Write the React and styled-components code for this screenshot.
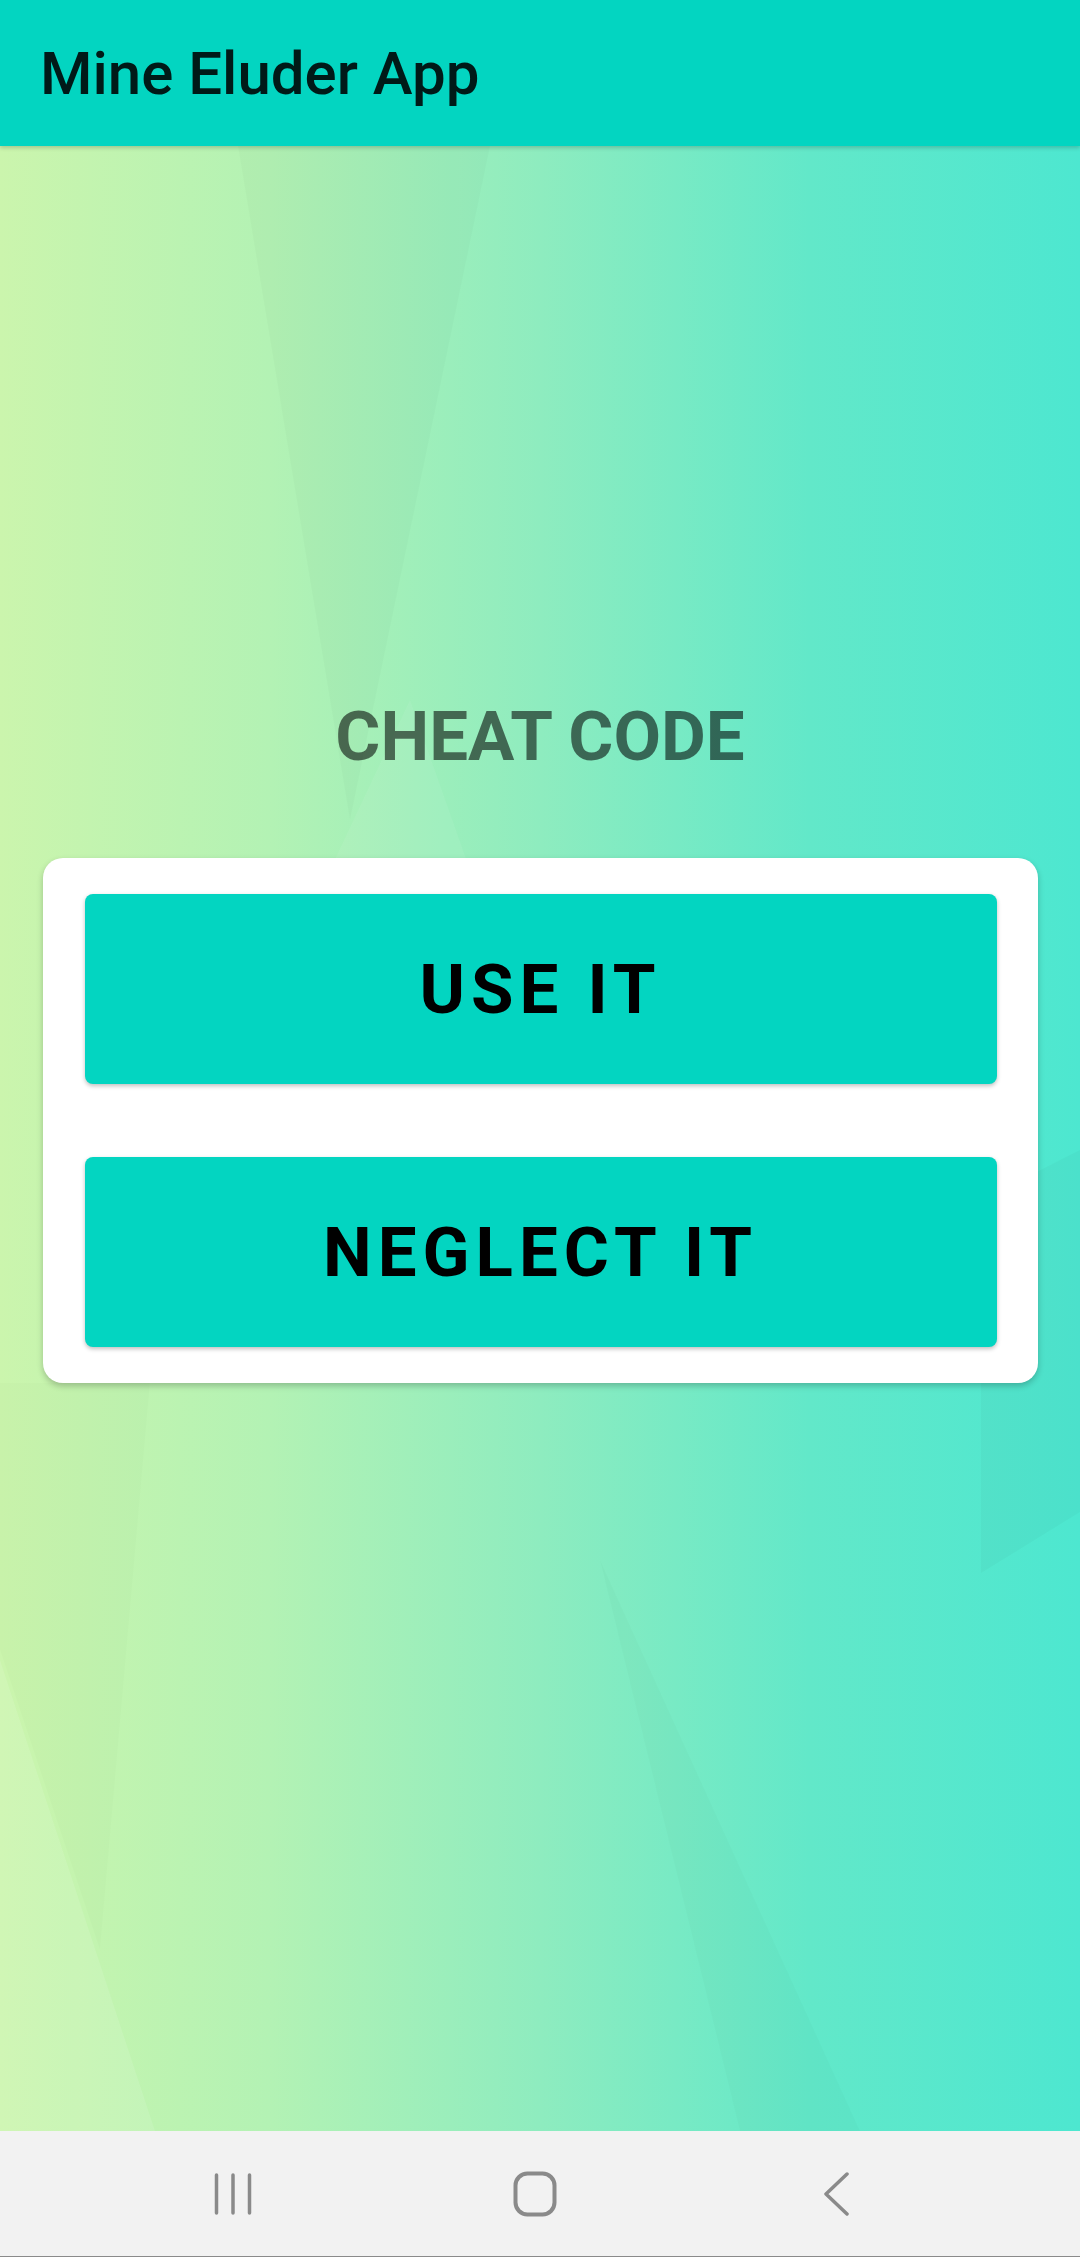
import React from 'react'
import styled, { createGlobalStyle } from "styled-components"

const GlobalStyle = createGlobalStyle`
  html, body {
    margin: 0;
    padding: 0;
  }
  body {
    font-family: Roboto, "Noto Sans", "Liberation Sans", sans-serif;
  }
`;

// faint polygon facets of the wallpaper
const facets = `<svg xmlns='http://www.w3.org/2000/svg' viewBox='0 0 1080 2257' preserveAspectRatio='none'>
<polygon points='238,146 490,146 350,820' fill='black' fill-opacity='0.018'/>
<polygon points='330,870 470,870 410,700' fill='white' fill-opacity='0.06'/>
<polygon points='981,1200 1080,1150 1080,1512 981,1573' fill='black' fill-opacity='0.025'/>
<polygon points='0,1383 150,1383 100,1950 0,1650' fill='black' fill-opacity='0.012'/>
<polygon points='0,1660 0,2131 155,2131' fill='white' fill-opacity='0.1'/>
<polygon points='600,1560 740,2131 860,2131' fill='black' fill-opacity='0.015'/>
</svg>`;

const Page = styled.div`
    display: flex;
    flex-direction: column;
    min-height: 2257px;
    background-image:
        url("data:image/svg+xml,${encodeURIComponent(facets)}"),
        linear-gradient(90deg, #cbf5ad 0%, #b3f2b4 25%, #8eecbf 50%, #62e8c9 75%, #4de7d0 100%);
    background-size: 100% 100%;
`;

const TopBar = styled.header`
    height: 146px;
    display: flex;
    align-items: center;
    padding-left: 40px;
    background: #03d5c1;
    box-shadow: 0 2px 4px rgba(0, 0, 0, 0.18);
    box-sizing: border-box;
    z-index: 1;

    & h1 {
        margin: 0;
        font-size: 60px;
        font-weight: 500;
        color: rgba(0, 0, 0, 0.88);
    }
`;

const Main = styled.main`
    flex: 1;
    display: flex;
    flex-direction: column;
    align-items: center;
    padding-top: 550px;
`;

const Heading = styled.h2`
    margin: 0;
    font-size: 69px;
    line-height: 82px;
    font-weight: 700;
    color: rgba(0, 0, 0, 0.56);
`;

const Card = styled.section`
    margin-top: 80px;
    width: 995px;
    box-sizing: border-box;
    padding: 36px 41px 36px 42px;
    display: flex;
    flex-direction: column;
    gap: 73px;
    background: #fff;
    border-radius: 20px;
    box-shadow: 0 3px 6px rgba(0, 0, 0, 0.22);
`;

const ActionButton = styled.button`
    height: 190px;
    border: none;
    border-radius: 8px;
    background: #03d5c1;
    color: #000;
    font-family: Roboto, "Noto Sans", sans-serif;
    font-size: 69px;
    font-weight: 700;
    letter-spacing: 6px;
    box-shadow: 0 2px 4px rgba(0, 0, 0, 0.25);
    cursor: pointer;
`;

const NavBar = styled.nav`
    height: 126px;
    display: grid;
    grid-template-columns: repeat(3, 302px);
    justify-content: center;
    align-items: center;
    padding-right: 10px;
    background: #f2f2f2;
    border-bottom: 1px solid #8a8a8a;
    box-sizing: border-box;
    color: #8a8a8a;
`;

const NavSlot = styled.div`
    display: flex;
    justify-content: center;
    align-items: center;
`;

const RecentsIcon = () => (
    <svg width="40" height="42" viewBox="0 0 40 42">
        <g stroke="currentColor" strokeWidth="3.5" strokeLinecap="round">
            <line x1="3.5" y1="2" x2="3.5" y2="40" />
            <line x1="20" y1="2" x2="20" y2="40" />
            <line x1="36.5" y1="2" x2="36.5" y2="40" />
        </g>
    </svg>
);

const HomeIcon = () => (
    <svg width="44" height="46" viewBox="0 0 44 46">
        <rect x="2.5" y="2.5" width="39" height="41" rx="12" fill="none" stroke="currentColor" strokeWidth="4" />
    </svg>
);

const BackIcon = () => (
    <svg width="28" height="44" viewBox="0 0 28 44">
        <polyline points="24,2 3,22 24,42" fill="none" stroke="currentColor" strokeWidth="3.5" strokeLinecap="round" strokeLinejoin="round" />
    </svg>
);

const App = () => {
  return (
    <>
        <GlobalStyle />
        <Page>
            <TopBar>
                <h1>Mine Eluder App</h1>
            </TopBar>
            <Main>
                <Heading>CHEAT CODE</Heading>
                <Card>
                    <ActionButton>USE IT</ActionButton>
                    <ActionButton>NEGLECT IT</ActionButton>
                </Card>
            </Main>
            <NavBar>
                <NavSlot><RecentsIcon /></NavSlot>
                <NavSlot><HomeIcon /></NavSlot>
                <NavSlot><BackIcon /></NavSlot>
            </NavBar>
        </Page>
    </>
  )
}

export default App
